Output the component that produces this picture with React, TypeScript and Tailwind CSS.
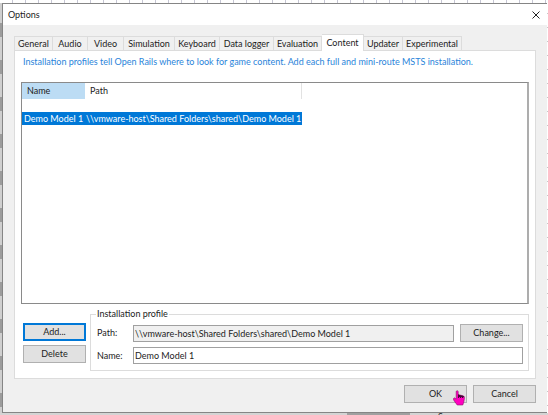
import { useState } from "react";

const tabs = [
  { name: "General", width: "w-[39px]" },
  { name: "Audio", width: "w-[35px]" },
  { name: "Video", width: "w-[36px]" },
  { name: "Simulation", width: "w-[51px]" },
  { name: "Keyboard", width: "w-[45px]" },
  { name: "Data logger", width: "w-[54px]" },
  { name: "Evaluation", width: "w-[48px]" },
  { name: "Content", width: "w-[42px]" },
  { name: "Updater", width: "w-[39px]" },
  { name: "Experimental", width: "w-[59px]" },
];

const button =
  "flex h-[18px] w-[63px] shrink-0 items-center justify-center border border-[#b0b0b0] bg-[#e1e1e1]";

function Cursor() {
  return (
    <svg
      className="absolute right-[2px] top-[5px] h-4 w-3"
      viewBox="0 0 12 16"
      aria-hidden="true"
    >
      <path
        d="M3.2 1.2Q4.4 0 5.2 1.4V4.6L10.5 5.9Q11.7 6.4 11.4 8.4L10.8 12L9.8 15H4.2L.9 10.4Q-.2 8.4 1.2 7.8L3.2 9Z"
        fill="#ff00bf"
        stroke="#8a1269"
        strokeWidth=".6"
      />
      <path d="M5.5 4.6V8M7.5 5.2V8M9.5 5.8V8M5.2 5.2L10.8 6.6" stroke="#3d0a30" strokeWidth="1.1" />
    </svg>
  );
}

export default function App() {
  const [active, setActive] = useState("Content");
  const [name, setName] = useState("Demo Model 1");

  return (
    <div className="relative flex min-h-screen flex-col overflow-hidden bg-white bg-[repeating-linear-gradient(to_bottom,#cfcfcf_0px,#cfcfcf_23px,#9c9c9c_23px,#9c9c9c_37px)] pt-[3px] pr-px pb-[2px] pl-[2px] font-[Lato,'Open_Sans',sans-serif] text-[9px] leading-3 text-[#1c1c1c]">
      <div className="absolute inset-x-0 top-0 h-[3px] bg-white bg-[repeating-linear-gradient(to_right,#fff_0px,#fff_12px,#c6c6d4_12px,#c6c6d4_13px)]" />
      <div className="absolute inset-y-0 right-0 w-px bg-white bg-[repeating-linear-gradient(to_bottom,#fff_0px,#fff_13px,#c8c8c8_13px,#c8c8c8_14px)]" />
      <div className="absolute inset-x-0 bottom-0 flex h-[2px] items-start overflow-hidden bg-[#d4d4d4] pl-[347px]">
        <div className="h-full w-[63px] bg-[#a0a0a0]" />
        <span className="ml-7 leading-[8px]">Server</span>
      </div>

      <div className="relative flex grow flex-col border border-r-0 border-[#858585] bg-[#f0f0f0]">
        <header className="flex h-[21px] items-center justify-between bg-white pr-[6px] pl-[5px]">
          <h1>Options</h1>
          <button aria-label="Close" className="p-px">
            <svg className="size-2" viewBox="0 0 8 8" aria-hidden="true">
              <path d="M.5 .5L7.5 7.5M7.5 .5L.5 7.5" stroke="#222" strokeWidth="1" />
            </svg>
          </button>
        </header>

        <main className="flex grow flex-col px-[11px] pt-[9px]">
          <div role="tablist" className="relative z-10 -mb-px flex h-[17px] items-end">
            {tabs.map((tab) => (
              <button
                key={tab.name}
                role="tab"
                aria-selected={active === tab.name}
                onClick={() => setActive(tab.name)}
                className={`${tab.width} shrink-0 border-t border-r border-[#dcdcdc] text-center whitespace-nowrap first:border-l ${
                  active === tab.name ? "h-[17px] bg-white pb-px" : "h-[15px] border-b bg-[#f0f0f0]"
                }`}
              >
                {tab.name}
              </button>
            ))}
          </div>

          <section className="flex grow flex-col border border-[#dcdcdc] bg-white px-[6px] pt-[5px] pb-[7px]">
            <p className="ml-[2px] whitespace-nowrap text-[#2a84da]">
              Installation profiles tell Open Rails where to look for game content. Add each full and mini-route MSTS installation.
            </p>

            <div className="mt-[14px] min-h-[222px] grow border border-r-2 border-[#8a8a8a] border-r-[#adadad]">
              <table className="w-[280px] table-fixed border-collapse text-left">
                <thead>
                  <tr className="h-4">
                    <th className="w-[63px] bg-[#bcdcf4] p-0 pl-[5px] font-normal">Name</th>
                    <th className="border-r border-[#e2e2e2] p-0 pl-[5px] font-normal">Path</th>
                  </tr>
                </thead>
                <tbody>
                  <tr className="h-[13px]" aria-hidden="true"><td colSpan={2} className="p-0" /></tr>
                  <tr className="h-[13px] bg-[#0078d7] whitespace-nowrap text-white">
                    <td className="p-0 pl-[2px]">Demo Model 1</td>
                    <td className="p-0 pl-px">\\vmware-host\Shared Folders\shared\Demo Model 1</td>
                  </tr>
                </tbody>
              </table>
            </div>

            <div className="mt-1 flex gap-1">
              <div className="ml-[2px] flex flex-col gap-1 pt-[15px]">
                <button className="flex h-[18px] w-[63px] items-center justify-center border-2 border-[#0078d7] bg-[#e1e1e1]">Add...</button>
                <button className={button}>Delete</button>
              </div>
              <fieldset className="flex min-w-0 grow flex-col border border-[#dcdcdc] pr-[5px] pb-[6px] pl-[6px]">
                <legend className="-ml-px px-px">Installation profile</legend>
                <div className="flex items-center pt-1">
                  <label htmlFor="path" className="w-9 shrink-0">Path:</label>
                  <input
                    id="path"
                    readOnly
                    value="\\vmware-host\Shared Folders\shared\Demo Model 1"
                    className="h-[17px] min-w-0 grow border border-[#a0a0a0] bg-[#f0f0f0] px-px outline-none"
                  />
                  <button className={`${button} ml-[6px]`}>Change...</button>
                </div>
                <div className="mt-[5px] flex items-center">
                  <label htmlFor="name" className="w-9 shrink-0">Name:</label>
                  <input
                    id="name"
                    value={name}
                    onChange={(e) => setName(e.target.value)}
                    className="h-[17px] min-w-0 grow border border-[#a0a0a0] bg-white px-px outline-none"
                  />
                </div>
              </fieldset>
            </div>
          </section>

          <footer className="flex justify-end gap-[6px] pt-[6px] pb-[9px]">
            <div className="relative">
              <button className={button}>OK</button>
              <Cursor />
            </div>
            <button className={button}>Cancel</button>
          </footer>
        </main>
      </div>
    </div>
  );
}
